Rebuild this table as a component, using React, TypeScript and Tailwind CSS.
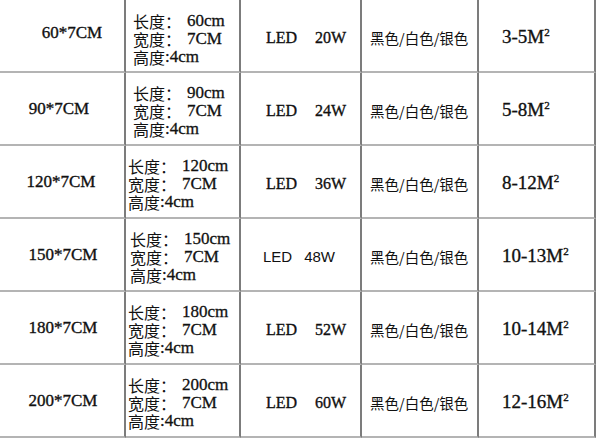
import React from "react";

const serif = { fontFamily: '"Liberation Serif", "Noto Sans CJK SC", serif' };
const cjk = { fontFamily: '"Noto Sans CJK SC", sans-serif' };

type Row = {
  size: string;
  len: string;
  power: string;
  area: string;
  sansLed?: boolean;
  col1Pad: string;
  col2Pad: string;
};

const rows: Row[] = [
  { size: "60*7CM", len: "60cm", power: "20W", area: "3-5", col1Pad: "pl-[20px] pb-[6px]", col2Pad: "pl-[7px] pt-[6px]" },
  { size: "90*7CM", len: "90cm", power: "24W", area: "5-8", col1Pad: "pr-[6px]", col2Pad: "pl-[7px] pt-[5px]" },
  { size: "120*7CM", len: "120cm", power: "36W", area: "8-12", col1Pad: "pr-[2px]", col2Pad: "pl-[2px] pt-[4px]" },
  { size: "150*7CM", len: "150cm", power: "48W", area: "10-13", sansLed: true, col1Pad: "pl-[2px]", col2Pad: "pl-[4px] pt-[4px]" },
  { size: "180*7CM", len: "180cm", power: "52W", area: "10-14", col1Pad: "pl-[2px]", col2Pad: "pl-[2px] pt-[4px]" },
  { size: "200*7CM", len: "200cm", power: "60W", area: "12-16", col1Pad: "pl-[2px]", col2Pad: "pl-[2px] pt-[4px]" },
];

const cell = "h-[73px] border-b-2 border-r-2 border-b-[#b4b4b4] border-r-[#7c7c7c]";

export default function App() {
  return (
    <div className="w-[596px] h-[439px] bg-white overflow-hidden text-[#111]" style={serif}>
      <div className="grid grid-cols-[126px_115px_121px_117px_117px] w-[596px]">
        {rows.map((r, i) => (
          <React.Fragment key={i}>
            <div className={`${cell} flex items-center justify-center text-[17px] [-webkit-text-stroke:0.35px] ${r.col1Pad}`}>
              {r.size}
            </div>
            <div className={`${cell} flex flex-col justify-center text-[16px] ${r.col2Pad}`}>
              <div className="h-[18px] flex items-center leading-[18px] whitespace-nowrap">
                <span style={cjk} className="text-[16px] leading-[18px]">长度：</span>
                <span className="ml-[6px] leading-[18px] [-webkit-text-stroke:0.3px] text-[17px]">{r.len}</span>
              </div>
              <div className="h-[18px] flex items-center leading-[18px] whitespace-nowrap">
                <span style={cjk} className="text-[16px] leading-[18px]">宽度：</span>
                <span className="ml-[6px] leading-[18px] [-webkit-text-stroke:0.3px] text-[17px]">7CM</span>
              </div>
              <div className="h-[18px] flex items-center leading-[18px] whitespace-nowrap">
                <span style={cjk} className="text-[16px] leading-[18px]">高度</span>
                <span className="leading-[18px] [-webkit-text-stroke:0.3px] text-[17px]">:4cm</span>
              </div>
            </div>
            <div className={`${cell} flex items-center pt-[5px]`}>
              {r.sansLed ? (
                <span className="pl-[22px] text-[15px]" style={{ fontFamily: '"Liberation Sans", Arial, sans-serif' }}>
                  LED<span className="ml-[12px]">48W</span>
                </span>
              ) : (
                <span className="pl-[25px] text-[16px] [-webkit-text-stroke:0.35px] whitespace-nowrap">
                  LED<span className="ml-[18px]">{r.power}</span>
                </span>
              )}
            </div>
            <div className={`${cell} flex items-center pl-[8px] pt-[5px] text-[14.5px]`} style={cjk}>
              黑色/白色/银色
            </div>
            <div className={`${cell} flex items-center pl-[23px] pt-[4px] text-[19px] [-webkit-text-stroke:0.35px]`}>
              <span className="whitespace-nowrap">
                {r.area}M<span className="text-[11px] relative -top-[7px]">2</span>
              </span>
            </div>
          </React.Fragment>
        ))}
      </div>
    </div>
  );
}
